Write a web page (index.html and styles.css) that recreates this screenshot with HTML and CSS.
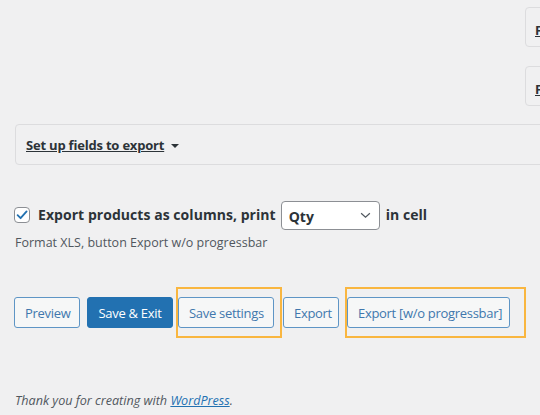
FILE: index.html
```html
<!DOCTYPE html>
<html>
<head>
<meta charset="utf-8">
<link rel="stylesheet" href="styles.css">
</head>
<body>
<div class="page">
  <div class="side-panels">
    <div class="side-box"><a class="side-link">F</a></div>
    <div class="side-box"><a class="side-link">F</a></div>
  </div>

  <div class="fields-box">
    <a class="fields-toggle">Set up fields to export</a>
    <span class="caret"></span>
  </div>

  <div class="option-row">
    <span class="checkbox">
      <svg viewBox="0 0 16 16" width="16" height="16"><path d="M3.6 8.2 L6.6 11.2 L12.6 4.4" fill="none" stroke="#2271b1" stroke-width="1.8" stroke-linecap="round" stroke-linejoin="round"/></svg>
    </span>
    <span class="option-label">Export products as columns, print</span>
    <span class="select">
      <span class="select-value">Qty</span>
      <svg class="chev" viewBox="0 0 12 8" width="11" height="7"><path d="M1 1.5 L6 6 L11 1.5" fill="none" stroke="#50575e" stroke-width="1.4"/></svg>
    </span>
    <span class="option-label">in cell</span>
  </div>
  <p class="desc">Format XLS, button Export w/o progressbar</p>

  <div class="buttons">
    <button class="btn btn-preview">Preview</button>
    <button class="btn btn-primary btn-saveexit">Save &amp; Exit</button>
    <button class="btn btn-save hl hl-save">Save settings</button>
    <button class="btn btn-export">Export</button>
    <button class="btn btn-export-nop hl hl-export">Export [w/o progressbar]</button>
  </div>

  <p class="footer">Thank you for creating with <a class="wp-link">WordPress</a>.</p>
</div>
</body>
</html>
```

FILE: styles.css
```css
html, body {
  margin: 0;
  padding: 0;
  background: #f0f0f1;
  overflow: hidden;
}
body {
  width: 540px;
  height: 415px;
  font-family: "Open Sans", "Noto Sans", sans-serif;
  color: #3c434a;
}
.page {
  padding: 7px 0 0 14px;
  width: 800px;
}
.side-panels {
  display: flex;
  flex-direction: column;
  gap: 19px;
  margin-left: 511px;
}
.side-box {
  width: 120px;
  border: 1px solid #dcdcde;
  border-radius: 4px;
  background: #f0f0f1;
  box-sizing: border-box;
  height: 40px;
  padding: 10px 0 0 9px;
}
.side-link {
  font-size: 13px;
  font-weight: 700;
  color: #2c3338;
  text-decoration: underline;
}
.fields-box {
  margin-top: 18px;
  margin-left: 1px;
  height: 41px;
  box-sizing: border-box;
  border: 1px solid #dcdcde;
  border-radius: 4px;
  display: flex;
  align-items: center;
  padding: 0 0 0 10px;
}
.fields-toggle {
  font-size: 13px;
  font-weight: 700;
  color: #2c3338;
  text-decoration: underline;
  letter-spacing: -0.2px;
}
.caret {
  width: 0;
  height: 0;
  border-left: 4px solid transparent;
  border-right: 4px solid transparent;
  border-top: 4px solid #2c3338;
  margin-left: 7px;
  margin-top: 2px;
}
.option-row {
  display: flex;
  align-items: center;
  margin-top: 35px;
  height: 30px;
}
.checkbox {
  width: 16px;
  height: 16px;
  box-sizing: border-box;
  border: 1px solid #8c8f94;
  border-radius: 4px;
  background: #fff;
  display: flex;
  margin-right: 8px;
  margin-top: -1px;
}
.checkbox svg {
  margin: -1px;
}
.option-label {
  font-size: 14px;
  font-weight: 700;
  color: #2c3338;
  letter-spacing: 0.05px;
  margin-top: -2px;
}
.select {
  width: 99px;
  height: 29px;
  box-sizing: border-box;
  border: 1px solid #8c8f94;
  border-radius: 4px;
  background: #fff;
  display: flex;
  align-items: center;
  justify-content: space-between;
  padding: 0 8px 0 7px;
  margin: 0 6px 0 5px;
}
.select-value {
  font-size: 14px;
  font-weight: 700;
  color: #2c3338;
  margin-top: 2px;
}
.desc {
  margin: 4px 0 0 1px;
  font-size: 12.5px;
  color: #50575e;
}
.buttons {
  display: flex;
  align-items: center;
  margin-top: 46px;
}
.btn {
  position: relative;
  height: 31px;
  box-sizing: border-box;
  border: 1px solid #5e95c5;
  border-radius: 3px;
  background: #f6f7f7;
  color: #4177ad;
  font-family: "Open Sans", "Noto Sans", sans-serif;
  font-size: 13px;
  padding: 0 10px;
  letter-spacing: -0.3px;
  white-space: nowrap;
}
.btn-primary {
  background: #2271b1;
  border-color: #2271b1;
  color: #fff;
}
.btn-preview { width: 66px; }
.btn-saveexit { width: 86px; margin-left: 7px; }
.btn-save { width: 96px; margin-left: 5px; }
.btn-export { width: 56px; margin-left: 9px; }
.btn-export-nop { width: 163px; margin-left: 8px; }
.hl::after {
  content: "";
  position: absolute;
  border: 2px solid #f9b640;
  top: -11px;
  bottom: -11px;
  left: -3px;
}
.hl-save::after { right: -9px; }
.hl-export::after { right: -17px; }
.footer {
  margin: 64px 0 0 1px;
  font-size: 12.6px;
  font-style: italic;
  color: #50575e;
}
.wp-link {
  color: #2271b1;
  text-decoration: underline;
}
```
